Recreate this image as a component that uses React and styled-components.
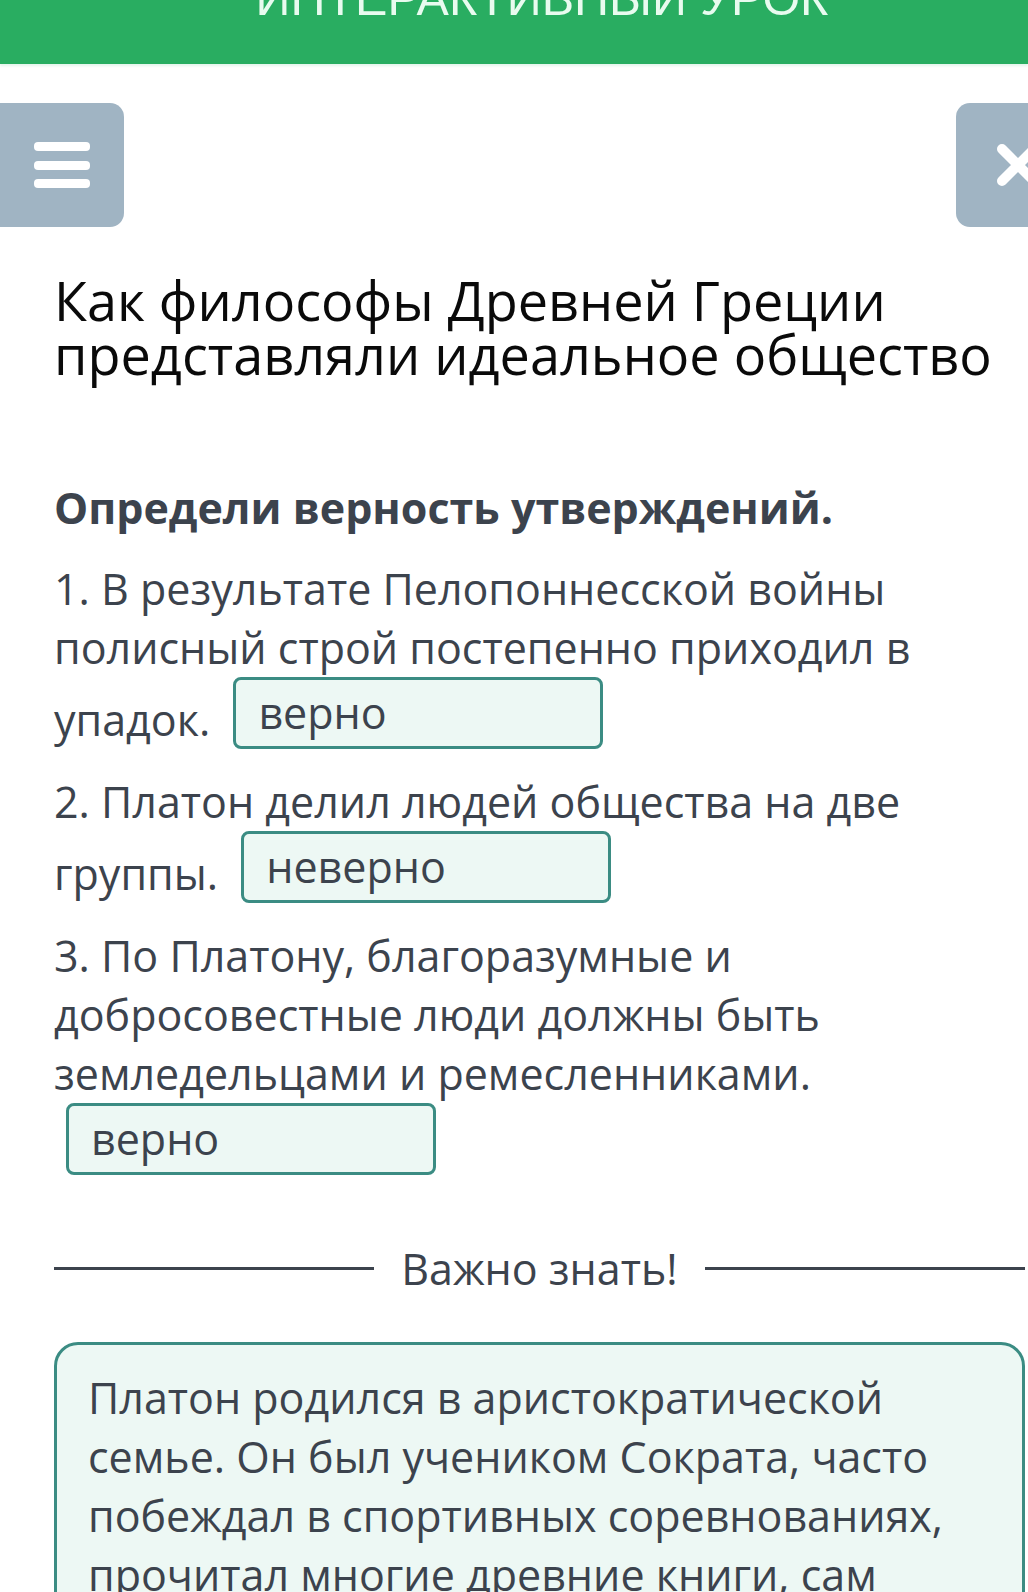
import React from "react";
import styled, { createGlobalStyle } from "styled-components";

const Global = createGlobalStyle`
  html, body {
    margin: 0;
    padding: 0;
    background: #ffffff;
    overflow-x: hidden;
  }
  body {
    font-family: "Open Sans", "Noto Sans", sans-serif;
  }
`;

const Page = styled.div`
  width: 1028px;
  overflow: hidden;
`;

const Header = styled.header`
  height: 64px;
  background: #29ad61;
  box-shadow: 0 2px 2px rgba(41, 173, 97, 0.12);
  overflow: hidden;
  display: flex;
  justify-content: center;
  padding-left: 56px;
`;

const HeaderTitle = styled.h1`
  margin: -25px 0 0;
  font-family: "Liberation Sans", Arial, sans-serif;
  font-weight: 400;
  font-size: 48.5px;
  line-height: 46px;
  color: #e8fbef;
  white-space: nowrap;
`;

const Toolbar = styled.div`
  margin-top: 39px;
  display: flex;
  justify-content: space-between;
  margin-right: -52px;
`;

const ToolButton = styled.button`
  width: 124px;
  height: 124px;
  border: none;
  padding: 0;
  background: #a0b4c3;
  border-radius: ${(p) => (p.$side === "left" ? "0 14px 14px 0" : "14px")};
  display: flex;
  flex-direction: column;
  align-items: center;
  justify-content: center;
  gap: 9.5px;
`;

const Bar = styled.span`
  display: block;
  width: 56px;
  height: 9px;
  border-radius: 4px;
  background: #ffffff;
`;

const Content = styled.main`
  width: 971px;
  padding-left: 54px;
`;

const Title = styled.h2`
  margin: 46px 0 0;
  font-weight: 400;
  font-size: 54px;
  line-height: 54px;
  color: #0a0a0a;
`;

const Task = styled.h3`
  margin: 102px 0 0;
  font-weight: 700;
  font-size: 43px;
  line-height: 50px;
  color: #3c434d;
`;

const Statements = styled.div`
  margin-top: 26px;
  display: flex;
  flex-direction: column;
  gap: 23px;
`;

const Statement = styled.p`
  margin: 0;
  font-size: 43px;
  line-height: 59px;
  color: #3c434d;
`;

const Answer = styled.span`
  display: inline-block;
  box-sizing: border-box;
  width: 370px;
  height: 72px;
  margin-left: 12px;
  padding: 3px 22px;
  border: 3px solid #3b8c83;
  border-radius: 8px;
  background: #edf8f4;
  line-height: 60px;
  vertical-align: 7px;
  color: #3c434d;
`;

const Divider = styled.div`
  margin-top: 64px;
  display: grid;
  grid-template-columns: 1fr auto 1fr;
  align-items: center;
  column-gap: 27px;
`;

const Rule = styled.span`
  display: block;
  height: 3px;
  background: #3c434d;
`;

const DividerLabel = styled.span`
  font-size: 43px;
  line-height: 59px;
  color: #3c434d;
`;

const InfoCard = styled.section`
  margin-top: 44px;
  border: 3px solid #3b8c83;
  border-radius: 24px;
  background: #edf8f4;
  padding: 23px 31px 40px;
`;

const InfoText = styled.p`
  margin: 0;
  font-size: 43px;
  line-height: 59px;
  color: #3c434d;
`;

const statements = [
  {
    text: "1. В результате Пелопоннесской войны полисный строй постепенно приходил в упадок.",
    answer: "верно",
  },
  { text: "2. Платон делил людей общества на две группы.", answer: "неверно" },
  {
    text: "3. По Платону, благоразумные и добросовестные люди должны быть земледельцами и ремесленниками.",
    answer: "верно",
  },
];

export default function App() {
  return (
    <Page>
      <Global />
      <Header>
        <HeaderTitle>ИНТЕРАКТИВНЫЙ УРОК</HeaderTitle>
      </Header>
      <Toolbar>
        <ToolButton $side="left" aria-label="Меню">
          <Bar />
          <Bar />
          <Bar />
        </ToolButton>
        <ToolButton $side="right" aria-label="Закрыть">
          <svg width="46" height="44" viewBox="0 0 46 44">
            <path
              d="M7 6 L39 38 M39 6 L7 38"
              stroke="#ffffff"
              strokeWidth="10"
              strokeLinecap="round"
              fill="none"
            />
          </svg>
        </ToolButton>
      </Toolbar>
      <Content>
        <Title>
          Как философы Древней Греции представляли идеальное общество
        </Title>
        <Task>Определи верность утверждений.</Task>
        <Statements>
          {statements.map((s, i) => (
            <Statement key={i}>
              {s.text} <Answer>{s.answer}</Answer>
            </Statement>
          ))}
        </Statements>
        <Divider>
          <Rule />
          <DividerLabel>Важно знать!</DividerLabel>
          <Rule />
        </Divider>
        <InfoCard>
          <InfoText>
            Платон родился в аристократической семье. Он был учеником Сократа,
            часто побеждал в спортивных соревнованиях, прочитал многие древние
            книги, сам писал стихи и трагедии.
          </InfoText>
        </InfoCard>
      </Content>
    </Page>
  );
}
